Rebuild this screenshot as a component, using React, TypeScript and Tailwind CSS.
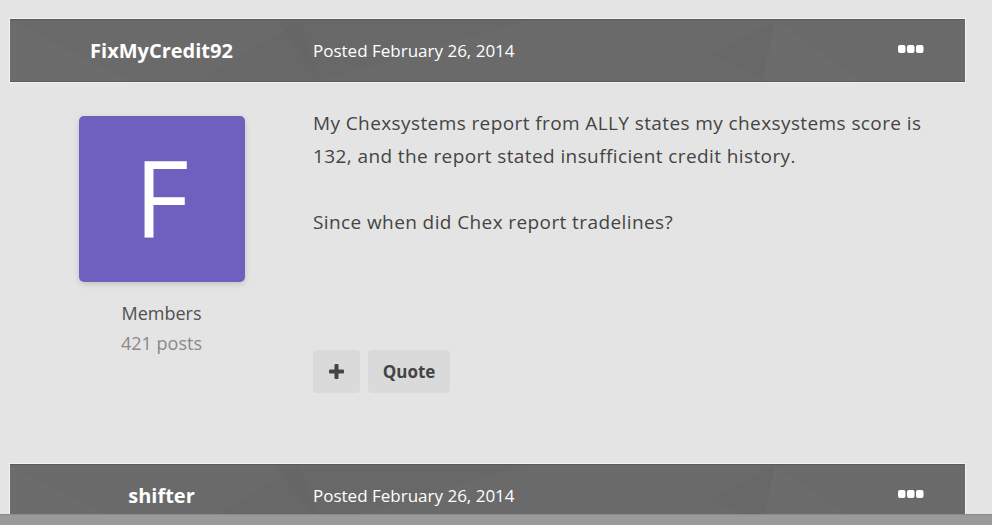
import { Fragment } from 'react';

type Post = {
  author: string;
  date: string;
  initial?: string;
  group?: string;
  posts?: number;
  body?: string[];
};

const posts: Post[] = [
  {
    author: 'FixMyCredit92',
    date: 'February 26, 2014',
    initial: 'F',
    group: 'Members',
    posts: 421,
    body: [
      'My Chexsystems report from ALLY states my chexsystems score is 132, and the report stated insufficient credit history.',
      'Since when did Chex report tradelines?',
    ],
  },
  { author: 'shifter', date: 'February 26, 2014' },
];

const font = { fontFamily: '"Segoe UI", "Open Sans", "Noto Sans", sans-serif' };

const Facets = () => (
  <svg className="absolute inset-0 h-full w-full" preserveAspectRatio="none" viewBox="0 0 955 63">
    <polygon points="0,0 120,63 0,63" fill="#ffffff" opacity="0.015" />
    <polygon points="290,0 310,63 190,63" fill="#000000" opacity="0.015" />
    <polygon points="265,0 520,0 310,63" fill="#000000" opacity="0.012" />
    <polygon points="765,0 753,63 850,63" fill="#ffffff" opacity="0.02" />
    <polygon points="765,0 700,35 753,63" fill="#000000" opacity="0.015" />
  </svg>
);

const Dots = () => (
  <svg width="26" height="9" viewBox="0 0 26 9">
    <rect x="0" y="0" width="7.5" height="8" rx="2" fill="#fff" />
    <rect x="9" y="0" width="7.5" height="8" rx="2" fill="#fff" />
    <rect x="18" y="0" width="7.5" height="8" rx="2" fill="#fff" />
  </svg>
);

const PostHeader = ({ post }: { post: Post }) => (
  <div className="relative flex h-[63px] shrink-0 items-center border-y border-[#5a5a5a] bg-[#6a6a6a] outline outline-1 outline-[#f2f2f2]">
    <Facets />
    <div className="relative w-[303px] text-center text-[20px] font-bold text-white">{post.author}</div>
    <div className="relative flex-1 text-[17px] text-white">Posted {post.date}</div>
    <div className="relative mr-[41px] mt-[-2px] flex">
      <Dots />
    </div>
  </div>
);

const PostBody = ({ post }: { post: Post }) => (
  <div className="flex h-[382px] shrink-0">
    <div className="flex w-[303px] flex-col items-center pt-[34px]">
      <div className="flex h-[166px] w-[166px] items-center justify-center rounded-[5px] bg-[#6f60c0] text-[106px] leading-none text-white shadow-[0_2px_6px_rgba(0,0,0,0.15)]">
        <span className="mt-[-4px]">{post.initial}</span>
      </div>
      <div className="mt-[16px] text-[18px] leading-[30px] text-[#505050]">{post.group}</div>
      <div className="text-[18px] leading-[30px] text-[#8a8a8a]">{post.posts} posts</div>
    </div>
    <div className="flex flex-1 flex-col pr-[30px] pt-[25px]">
      <div className="text-[19px] leading-[33px] tracking-[0.4px] text-[#444]">
        {post.body?.map((p, i) => (
          <Fragment key={i}>
            {i > 0 && <div className="h-[33px]" />}
            <p>{p}</p>
          </Fragment>
        ))}
      </div>
      <div className="mt-[111px] flex gap-2">
        <button className="flex h-[43px] w-[47px] items-center justify-center rounded-[4px] bg-[#dadada]">
          <svg width="15" height="15" viewBox="0 0 15 15">
            <rect x="5.5" y="0" width="4" height="15" rx="1" fill="#444" />
            <rect x="0" y="5.5" width="15" height="4" rx="1" fill="#444" />
          </svg>
        </button>
        <button className="h-[43px] w-[82px] rounded-[4px] bg-[#dadada] text-[17px] font-bold text-[#444]">Quote</button>
      </div>
    </div>
  </div>
);

export default function App() {
  return (
    <div style={font} className="flex h-[525px] w-[992px] flex-col overflow-hidden bg-[#e4e4e4]">
      <div className="min-h-0 flex-1 overflow-hidden pl-[10px] pt-[19px]">
        <div className="flex w-[955px] flex-col">
          <PostHeader post={posts[0]} />
          <PostBody post={posts[0]} />
          <PostHeader post={posts[1]} />
        </div>
      </div>
      <div className="h-[11px] shrink-0 border-t border-[#8a8a8a] bg-[#9a9a9a]" />
    </div>
  );
}
